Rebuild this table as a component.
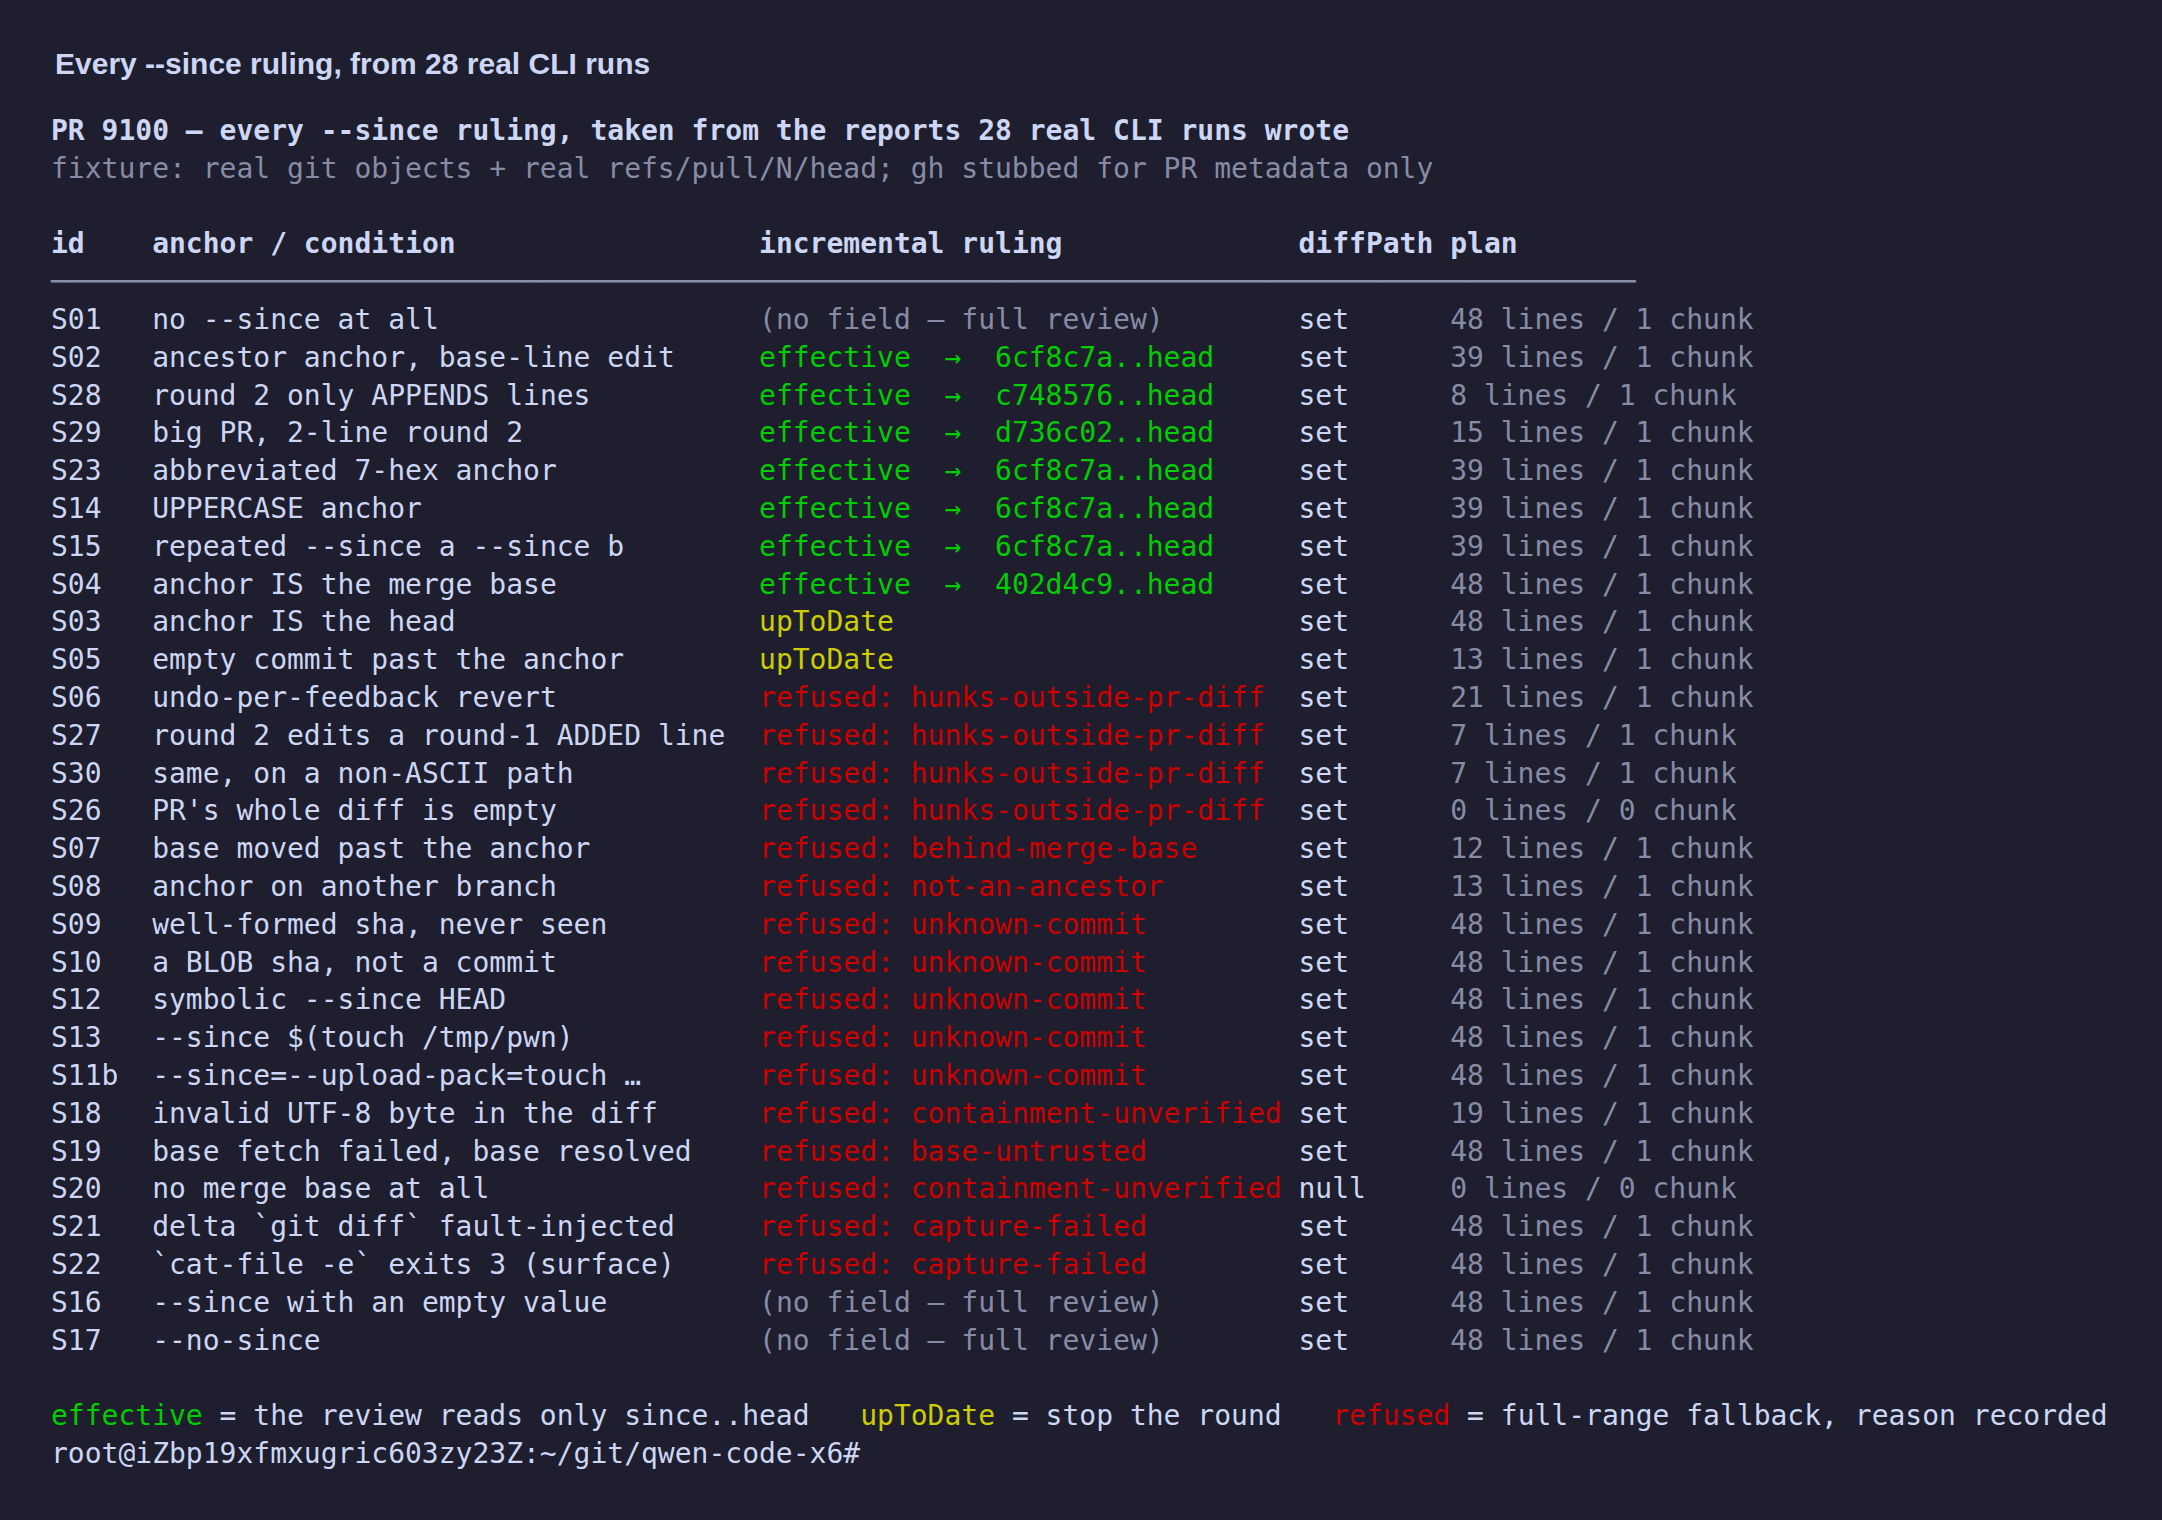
import React from "react";

type Tone = "ok" | "wait" | "bad" | "none";

type Run = {
    id: string;
    cond: string;
    ruling: string;
    tone: Tone;
    diffPath: string;
    plan: string;
};

const runs: Run[] = [
    { id: "S01", cond: "no --since at all", ruling: "(no field — full review)", tone: "none", diffPath: "set", plan: "48 lines / 1 chunk" },
    { id: "S02", cond: "ancestor anchor, base-line edit", ruling: "effective  →  6cf8c7a..head", tone: "ok", diffPath: "set", plan: "39 lines / 1 chunk" },
    { id: "S28", cond: "round 2 only APPENDS lines", ruling: "effective  →  c748576..head", tone: "ok", diffPath: "set", plan: "8 lines / 1 chunk" },
    { id: "S29", cond: "big PR, 2-line round 2", ruling: "effective  →  d736c02..head", tone: "ok", diffPath: "set", plan: "15 lines / 1 chunk" },
    { id: "S23", cond: "abbreviated 7-hex anchor", ruling: "effective  →  6cf8c7a..head", tone: "ok", diffPath: "set", plan: "39 lines / 1 chunk" },
    { id: "S14", cond: "UPPERCASE anchor", ruling: "effective  →  6cf8c7a..head", tone: "ok", diffPath: "set", plan: "39 lines / 1 chunk" },
    { id: "S15", cond: "repeated --since a --since b", ruling: "effective  →  6cf8c7a..head", tone: "ok", diffPath: "set", plan: "39 lines / 1 chunk" },
    { id: "S04", cond: "anchor IS the merge base", ruling: "effective  →  402d4c9..head", tone: "ok", diffPath: "set", plan: "48 lines / 1 chunk" },
    { id: "S03", cond: "anchor IS the head", ruling: "upToDate", tone: "wait", diffPath: "set", plan: "48 lines / 1 chunk" },
    { id: "S05", cond: "empty commit past the anchor", ruling: "upToDate", tone: "wait", diffPath: "set", plan: "13 lines / 1 chunk" },
    { id: "S06", cond: "undo-per-feedback revert", ruling: "refused: hunks-outside-pr-diff", tone: "bad", diffPath: "set", plan: "21 lines / 1 chunk" },
    { id: "S27", cond: "round 2 edits a round-1 ADDED line", ruling: "refused: hunks-outside-pr-diff", tone: "bad", diffPath: "set", plan: "7 lines / 1 chunk" },
    { id: "S30", cond: "same, on a non-ASCII path", ruling: "refused: hunks-outside-pr-diff", tone: "bad", diffPath: "set", plan: "7 lines / 1 chunk" },
    { id: "S26", cond: "PR's whole diff is empty", ruling: "refused: hunks-outside-pr-diff", tone: "bad", diffPath: "set", plan: "0 lines / 0 chunk" },
    { id: "S07", cond: "base moved past the anchor", ruling: "refused: behind-merge-base", tone: "bad", diffPath: "set", plan: "12 lines / 1 chunk" },
    { id: "S08", cond: "anchor on another branch", ruling: "refused: not-an-ancestor", tone: "bad", diffPath: "set", plan: "13 lines / 1 chunk" },
    { id: "S09", cond: "well-formed sha, never seen", ruling: "refused: unknown-commit", tone: "bad", diffPath: "set", plan: "48 lines / 1 chunk" },
    { id: "S10", cond: "a BLOB sha, not a commit", ruling: "refused: unknown-commit", tone: "bad", diffPath: "set", plan: "48 lines / 1 chunk" },
    { id: "S12", cond: "symbolic --since HEAD", ruling: "refused: unknown-commit", tone: "bad", diffPath: "set", plan: "48 lines / 1 chunk" },
    { id: "S13", cond: "--since $(touch /tmp/pwn)", ruling: "refused: unknown-commit", tone: "bad", diffPath: "set", plan: "48 lines / 1 chunk" },
    { id: "S11b", cond: "--since=--upload-pack=touch …", ruling: "refused: unknown-commit", tone: "bad", diffPath: "set", plan: "48 lines / 1 chunk" },
    { id: "S18", cond: "invalid UTF-8 byte in the diff", ruling: "refused: containment-unverified", tone: "bad", diffPath: "set", plan: "19 lines / 1 chunk" },
    { id: "S19", cond: "base fetch failed, base resolved", ruling: "refused: base-untrusted", tone: "bad", diffPath: "set", plan: "48 lines / 1 chunk" },
    { id: "S20", cond: "no merge base at all", ruling: "refused: containment-unverified", tone: "bad", diffPath: "null", plan: "0 lines / 0 chunk" },
    { id: "S21", cond: "delta `git diff` fault-injected", ruling: "refused: capture-failed", tone: "bad", diffPath: "set", plan: "48 lines / 1 chunk" },
    { id: "S22", cond: "`cat-file -e` exits 3 (surface)", ruling: "refused: capture-failed", tone: "bad", diffPath: "set", plan: "48 lines / 1 chunk" },
    { id: "S16", cond: "--since with an empty value", ruling: "(no field — full review)", tone: "none", diffPath: "set", plan: "48 lines / 1 chunk" },
    { id: "S17", cond: "--no-since", ruling: "(no field — full review)", tone: "none", diffPath: "set", plan: "48 lines / 1 chunk" },
];

const toneClass: Record<Tone, string> = {
    ok: "text-[#00cd00]",
    wait: "text-[#cdcd00]",
    bad: "text-[#cd0000]",
    none: "text-[#878ca6]",
};

function Row({ run }: { run: Run }) {
    return (
        <div>
            <span>{run.id.padEnd(6)}</span>
            <span>{run.cond.padEnd(36)}</span>
            <span className={toneClass[run.tone]}>{run.ruling.padEnd(32)}</span>
            <span>{run.diffPath.padEnd(9)}</span>
            <span className="text-[#878ca6]">{run.plan}</span>
        </div>
    );
}

export default function App() {
    return (
        <div className="min-h-screen w-full bg-[#1e1e2e] px-[51px] pt-[47px] text-[#cdd6f4]">
            <h1 className="pl-[4px] font-['Liberation_Sans',Arial,sans-serif] text-[30px] leading-[34px] font-bold">
                Every --since ruling, from 28 real CLI runs
            </h1>

            <div className="mt-[31px] whitespace-pre font-['DejaVu_Sans_Mono',monospace] text-[28px] leading-[37.8px]">
                <div className="font-bold">
                    PR 9100 — every --since ruling, taken from the reports 28 real CLI runs wrote
                </div>
                <div className="text-[#878ca6]">
                    fixture: real git objects + real refs/pull/N/head; gh stubbed for PR metadata only
                </div>
                <div> </div>
                <div className="font-bold">
                    {"id".padEnd(6)}
                    {"anchor / condition".padEnd(36)}
                    {"incremental ruling".padEnd(32)}
                    {"diffPath plan"}
                </div>
                <div className="text-[#8a8fa8]">{"─".repeat(94)}</div>

                {runs.map((run) => (
                    <Row run={run} key={run.id} />
                ))}

                <div> </div>
                <div>
                    <span className="text-[#00cd00]">effective</span>
                    {" = the review reads only since..head   "}
                    <span className="text-[#cdcd00]">upToDate</span>
                    {" = stop the round   "}
                    <span className="text-[#cd0000]">refused</span>
                    {" = full-range fallback, reason recorded"}
                </div>
                <div>root@iZbp19xfmxugric603zy23Z:~/git/qwen-code-x6#</div>
            </div>
        </div>
    );
}
